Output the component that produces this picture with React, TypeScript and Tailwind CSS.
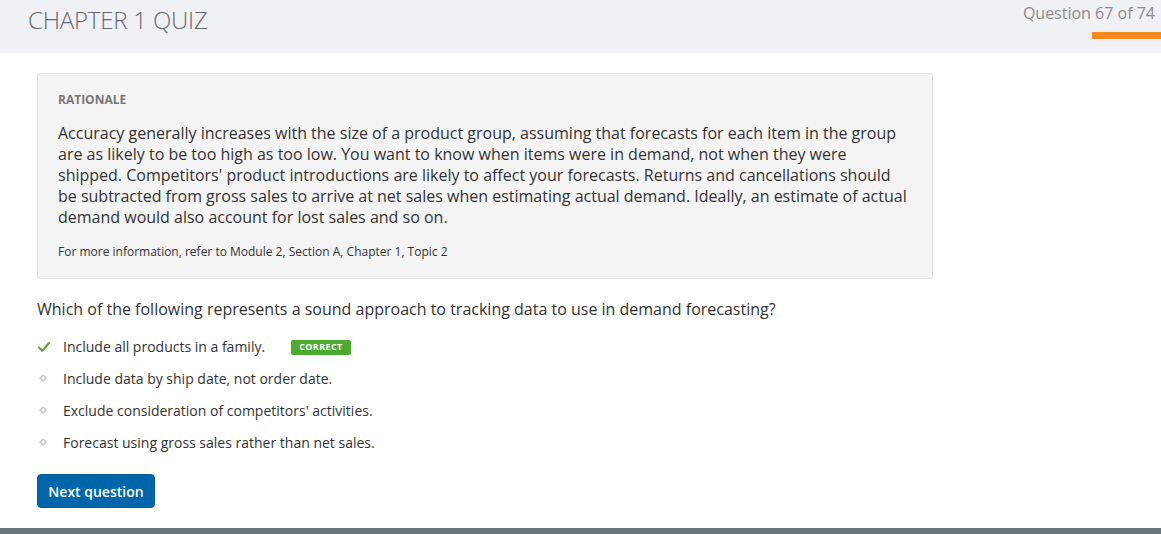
import * as React from "react";

const options = [
  { text: "Include all products in a family.", correct: true },
  { text: "Include data by ship date, not order date.", correct: false },
  { text: "Exclude consideration of competitors' activities.", correct: false },
  { text: "Forecast using gross sales rather than net sales.", correct: false },
];

function CheckIcon() {
  return (
    <svg width="14" height="12" viewBox="0 0 14 12" className="shrink-0">
      <path d="M2 6.5 L5.2 9.8 L12 2" fill="none" stroke="#5aa02c" strokeWidth="2" strokeLinecap="round" strokeLinejoin="round" />
    </svg>
  );
}

function Bullet() {
  return (
    <svg width="14" height="8" viewBox="0 0 14 8" className="shrink-0">
      <rect x="4" y="1" width="4.2" height="4.2" transform="rotate(45 6 3)" fill="none" stroke="#c4c4c4" strokeWidth="1.4" />
    </svg>
  );
}

export default function App() {
  return (
    <div className="min-h-[534px] bg-white flex flex-col" style={{ fontFamily: '"Open Sans", sans-serif' }}>
      <header className="h-[53px] bg-[#f0f1f5] flex justify-between">
        <h1 className="pl-[28px] pt-[5px] text-[24px] font-light text-[#666a70] leading-[30px] tracking-[-0.2px]">
          CHAPTER 1 QUIZ
        </h1>
        <div className="flex flex-col items-end pt-[3px]">
          <span className="pr-[6px] text-[16px] text-[#8c8c8c] leading-[20px]">Question 67 of 74</span>
          <div className="mt-[9px] h-[7px] w-[69px] bg-[#f58b1f]" />
        </div>
      </header>

      <main className="pl-[37px] pt-[20px] flex-1">
        <section className="w-[896px] rounded-[3px] border border-[#e2e2e2] bg-[#f4f4f4] px-[20px] pt-[18px] pb-[18px]">
          <h2 className="text-[12px] font-bold text-[#777777] leading-[16px]">RATIONALE</h2>
          <p className="mt-[15px] text-[16px] leading-[21px] text-[#333333]">
            Accuracy generally increases with the size of a product group, assuming that forecasts for each item in the group
            are as likely to be too high as too low. You want to know when items were in demand, not when they were
            shipped. Competitors' product introductions are likely to affect your forecasts. Returns and cancellations should
            be subtracted from gross sales to arrive at net sales when estimating actual demand. Ideally, an estimate of actual
            demand would also account for lost sales and so on.
          </p>
          <p className="mt-[16px] text-[12px] leading-[16px] text-[#333333]">
            For more information, refer to Module 2, Section A, Chapter 1, Topic 2
          </p>
        </section>

        <p className="mt-[19px] text-[16px] leading-[22px] text-[#333333]">
          Which of the following represents a sound approach to tracking data to use in demand forecasting?
        </p>

        <ul className="mt-[17px] flex flex-col gap-[12px]">
          {options.map((o) => (
            <li key={o.text} className="flex items-center h-[20px]">
              <span className="w-[26px] flex items-center">{o.correct ? <CheckIcon /> : <Bullet />}</span>
              <span className="text-[14px] text-[#333333] leading-[20px]">{o.text}</span>
              {o.correct && (
                <span className="ml-[26px] rounded-[2px] bg-[#4cab2f] px-[8px] h-[15px] flex items-center text-[9px] font-bold tracking-[0.4px] text-white">
                  CORRECT
                </span>
              )}
            </li>
          ))}
        </ul>

        <button className="mt-[21px] mb-[20px] h-[34px] w-[118px] rounded-[4px] border border-[#0a5a93] bg-[#0066ab] text-[14px] font-semibold text-white">
          Next question
        </button>
      </main>

      <div className="h-[6px] bg-[#6b757c]" />
    </div>
  );
}
